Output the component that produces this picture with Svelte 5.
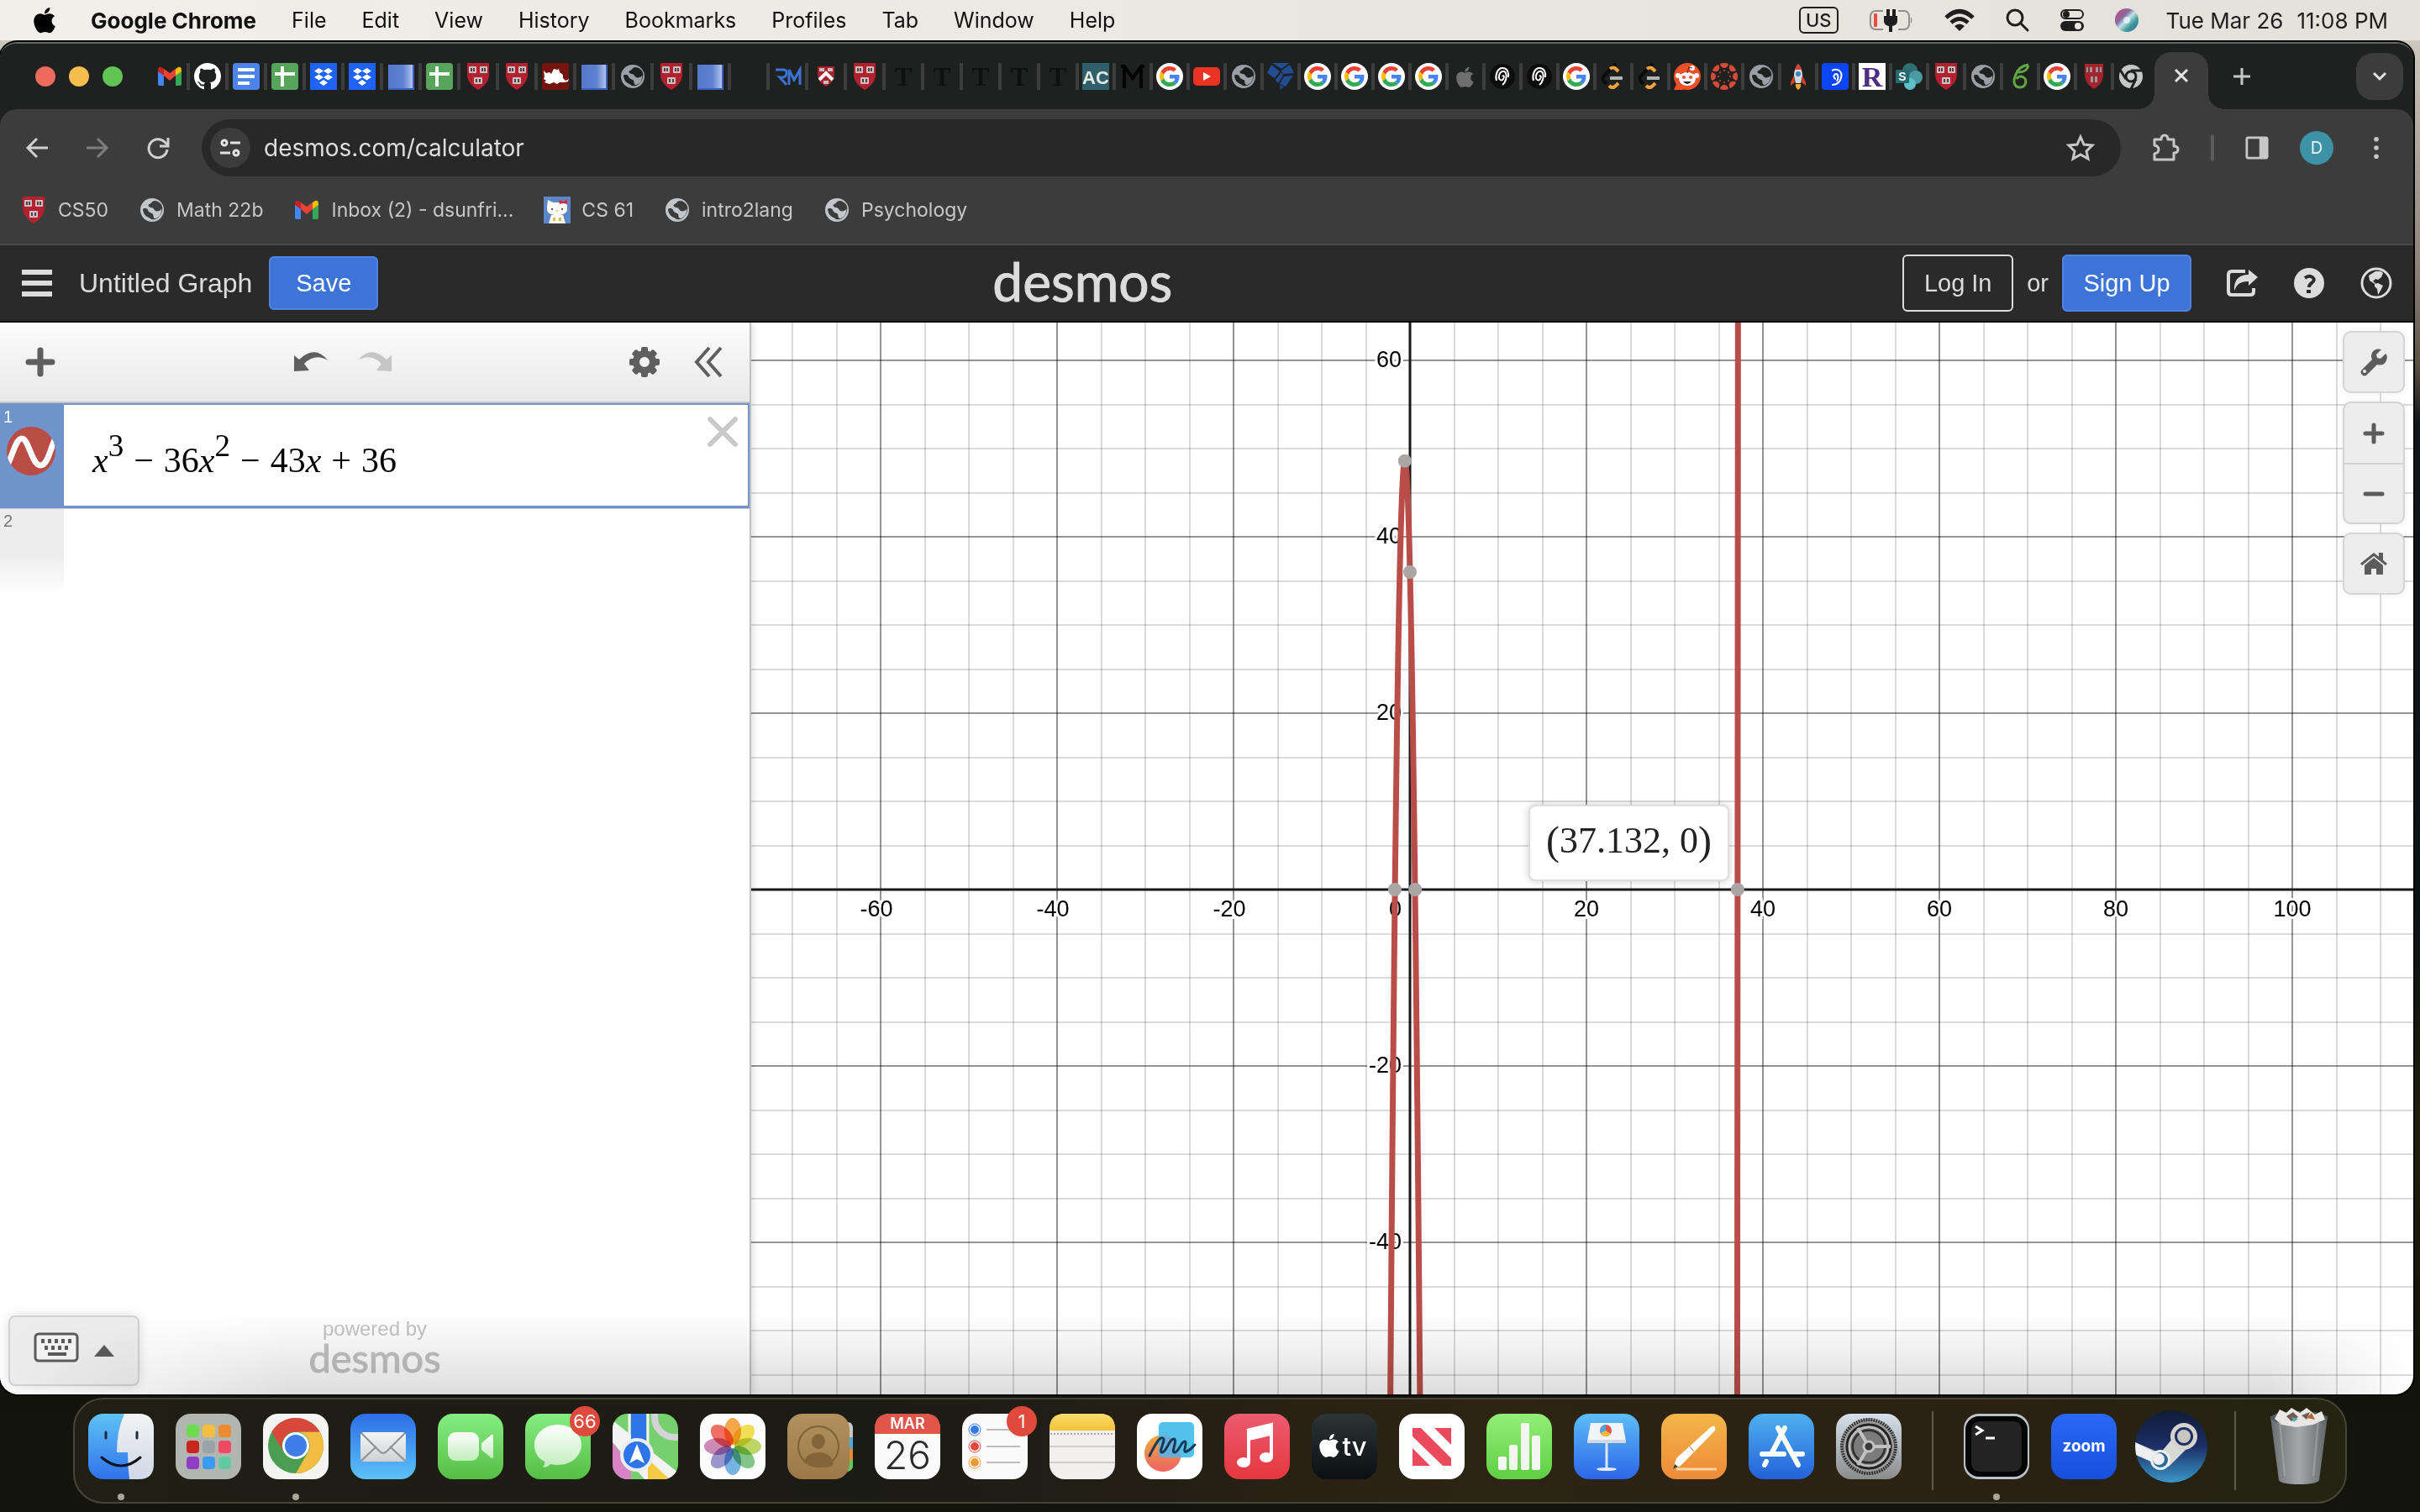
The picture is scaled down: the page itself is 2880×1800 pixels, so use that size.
<script>
  const menus = ['File', 'Edit', 'View', 'History', 'Bookmarks', 'Profiles', 'Tab', 'Window', 'Help'];

  const wideTabs = [
    'github', 'docs', 'sheets', 'dropbox', 'dropbox', 'blue', 'sheets', 'shield', 'shield', 'redcat',
    'blue', 'globe', 'shield', 'blue', 'blank', 'rm', 'shieldSmall', 'shield', 'nyt', 'nyt', 'nyt', 'nyt', 'nyt'
  ];
  const narrowTabs = [
    'ac', 'm', 'google', 'youtube', 'globe', 'gem', 'google', 'google', 'google', 'google', 'apple',
    'spiral', 'spiral', 'google', 'leet', 'leet', 'reddit', 'canvas', 'globe', 'rocket', 'nine', 'r',
    'sharepoint', 'shield', 'globe', 'green', 'google', 'shieldSmall2'
  ];

  const bookmarks = [
    { icon: 'shield', label: 'CS50' },
    { icon: 'globeLight', label: 'Math 22b' },
    { icon: 'gmail', label: 'Inbox (2) - dsunfri...' },
    { icon: 'kitty', label: 'CS 61' },
    { icon: 'globeLight', label: 'intro2lang' },
    { icon: 'globeLight', label: 'Psychology' }
  ];

  const dockMain = [
    { id: 'finder', name: 'Finder', running: true },
    { id: 'launchpad', name: 'Launchpad' },
    { id: 'chrome', name: 'Google Chrome', running: true },
    { id: 'mail', name: 'Mail' },
    { id: 'facetime', name: 'FaceTime' },
    { id: 'messages', name: 'Messages', badge: '66' },
    { id: 'maps', name: 'Maps' },
    { id: 'photos', name: 'Photos' },
    { id: 'contacts', name: 'Contacts' },
    { id: 'calendar', name: 'Calendar' },
    { id: 'reminders', name: 'Reminders', badge: '1' },
    { id: 'notes', name: 'Notes' },
    { id: 'freeform', name: 'Freeform' },
    { id: 'music', name: 'Music' },
    { id: 'tv', name: 'TV' },
    { id: 'news', name: 'News' },
    { id: 'numbers', name: 'Numbers' },
    { id: 'keynote', name: 'Keynote' },
    { id: 'pages', name: 'Pages' },
    { id: 'appstore', name: 'App Store' },
    { id: 'settings', name: 'System Settings' }
  ];
  const dockApps = [
    { id: 'terminal', name: 'Terminal', running: true },
    { id: 'zoom', name: 'Zoom' },
    { id: 'steam', name: 'Steam' }
  ];
  const dockEnd = [{ id: 'trash', name: 'Trash' }];

  // Graph geometry: origin and scale of the plotting area
  const W = 1978;
  const H = 1276;
  const ox = 784;
  const oy = 675;
  const unit = 10.5;
  const px = (x) => ox + x * unit;
  const py = (y) => oy - y * unit;
  const f = (x) => x ** 3 - 36 * x ** 2 - 43 * x + 36;

  function trace(from, to, step) {
    const pts = [];
    for (let x = from; x <= to; x += step) {
      const y = f(x);
      if (y > -70 && y < 80) pts.push(`${px(x).toFixed(2)},${py(y).toFixed(2)}`);
    }
    return pts.join(' ');
  }
  const hump = trace(-3, 3, 0.02);
  const riser = trace(37, 37.3, 0.001);

  const steps = Array.from({ length: 46 }, (_, i) => (i - 20) * 5);
  const vLines = steps.map((v) => ({ v, p: Math.round(px(v)), major: v % 20 === 0 })).filter((l) => l.p > 0 && l.p < W);
  const hLines = steps.map((v) => ({ v, p: Math.round(py(v)), major: v % 20 === 0 })).filter((l) => l.p > 0 && l.p < H);
  const points = [[-0.585, 48.6], [0, 36], [-1.72, 0], [0.59, 0], [37.132, 0]];
  const petals = ['#f79a2c', '#f3dc35', '#b5d14c', '#6fbf73', '#5fa8df', '#8d86c9', '#c878ac', '#f0574a'];
  const gearTeeth = Array.from({ length: 8 }, (_, i) => i * 45);
</script>

{#snippet googleG()}
  <path fill="#ea4335" d="M24 9.5c3.54 0 6.71 1.22 9.21 3.6l6.85-6.85C35.9 2.38 30.47 0 24 0 14.62 0 6.51 5.38 2.56 13.22l7.98 6.19C12.43 13.72 17.74 9.5 24 9.5z" />
  <path fill="#4285f4" d="M46.98 24.55c0-1.57-.15-3.09-.38-4.55H24v9.02h12.94c-.58 2.96-2.26 5.48-4.78 7.18l7.73 6c4.51-4.18 7.09-10.36 7.09-17.65z" />
  <path fill="#fbbc05" d="M10.53 28.59c-.48-1.45-.76-2.99-.76-4.59s.27-3.14.76-4.59l-7.98-6.19C.92 16.46 0 20.12 0 24c0 3.88.92 7.54 2.56 10.78l7.97-6.19z" />
  <path fill="#34a853" d="M24 48c6.48 0 11.93-2.13 15.89-5.81l-7.73-6c-2.15 1.45-4.92 2.3-8.16 2.3-6.26 0-11.57-4.22-13.47-9.91l-7.98 6.19C6.51 42.62 14.62 48 24 48z" />
{/snippet}

{#snippet appleMark()}
  <path d="M318.7 268.7c-.2-36.7 16.4-64.4 50-84.8-18.8-26.9-47.2-41.7-84.7-44.6-35.5-2.8-74.3 20.7-88.5 20.7-15 0-49.4-19.7-76.4-19.7C63.3 141.2 4 184.8 4 273.5q0 39.3 14.4 81.2c12.8 36.7 59 126.7 107.2 125.2 25.2-.6 43-17.9 75.8-17.9 31.8 0 48.3 17.9 76.4 17.9 48.6-.7 90.4-82.5 102.6-119.3-65.2-30.7-61.7-90-61.7-91.9zm-56.6-164.2c27.3-32.4 24.8-61.9 24-72.5-24.1 1.4-52 16.4-67.9 34.9-17.5 19.8-27.8 44.3-25.6 71.9 26.1 2 49.9-11.4 69.5-34.3z" />
{/snippet}

{#snippet shieldShape()}
  <path d="M3 0h26v13c0 9-6 15-13 19C9 28 3 22 3 13z" fill="#b3202f" />
  <g fill="#c9c0bf"><rect x="5" y="4" width="9" height="8" rx="1" /><rect x="18" y="4" width="9" height="8" rx="1" /><rect x="11" y="17" width="10" height="8" rx="1" /></g>
  <g fill="#5a3c3e"><rect x="7" y="6" width="2" height="4" /><rect x="10" y="6" width="2" height="4" /><rect x="20" y="6" width="2" height="4" /><rect x="23" y="6" width="2" height="4" /><rect x="13" y="19" width="2" height="4" /><rect x="17" y="19" width="2" height="4" /></g>
{/snippet}

{#snippet globeShape(fill, land)}
  <circle cx="16" cy="16" r="14" fill={fill} />
  <path fill={land} d="M20 5c-5 0-4 3-7 4s-1 4 2 4 3 3 5 4 6 0 7-2 0 7-3 9-5 3-6 1 0-4-2-5-4-1-5-4-6-2-6-1 1 7 5 9 4 2 5 3c3 1 9 0 12-7s1-13-7-15z" />
{/snippet}

{#snippet fav(name)}
  <svg class="fav" viewBox="0 0 32 32" aria-hidden="true">
    {#if name === 'gmail'}
      <path d="M2 9v16q0 2 2 2h5V14z" fill="#4285f4" />
      <path d="M30 9v16q0 2-2 2h-5V14z" fill="#34a853" />
      <path d="M23 7l3-2q4-1 4 4v1l-7 5z" fill="#fbbc04" />
      <path d="M2 10V9q0-5 4-4l3 2v8z" fill="#c5221f" />
      <path d="M9 7l7 5 7-5v8l-7 6-7-6z" fill="#ea4335" />
    {:else if name === 'github'}
      <path fill="#fff" transform="scale(2)" d="M8 0C3.58 0 0 3.58 0 8c0 3.54 2.29 6.53 5.47 7.59.4.07.55-.17.55-.38 0-.19-.01-.82-.01-1.49-2.01.37-2.53-.49-2.69-.94-.09-.23-.48-.94-.82-1.13-.28-.15-.68-.52-.01-.53.63-.01 1.08.58 1.23.82.72 1.21 1.87.87 2.33.66.07-.52.28-.87.51-1.07-1.78-.2-3.64-.89-3.64-3.95 0-.87.31-1.59.82-2.15-.08-.2-.36-1.02.08-2.12 0 0 .67-.21 2.2.82.64-.18 1.32-.27 2-.27s1.36.09 2 .27c1.53-1.04 2.2-.82 2.2-.82.44 1.1.16 1.92.08 2.12.51.56.82 1.27.82 2.15 0 3.07-1.87 3.75-3.65 3.95.29.25.54.73.54 1.48 0 1.07-.01 1.93-.01 2.2 0 .21.15.46.55.38A8.01 8.01 0 0016 8c0-4.42-3.58-8-8-8z" />
    {:else if name === 'docs'}
      <rect width="32" height="32" rx="4" fill="#4c84ec" />
      <path d="M6 8h20M6 16h20M6 24h14" stroke="#fff" stroke-width="4" />
    {:else if name === 'sheets'}
      <rect width="32" height="32" rx="4" fill="#56a55c" />
      <path d="M4 13h24M13 4v24" stroke="#fff" stroke-width="4" />
    {:else if name === 'dropbox'}
      <rect width="32" height="32" fill="#1e63f5" />
      <path fill="#fff" d="M10.500 6l5.500 3.500-5.500 3.500L5 9.500zM21.500 6L27 9.500 21.500 13 16 9.500zM10.500 13.500L16 17l-5.500 3.500L5 17zM21.500 13.500L27 17l-5.500 3.500L16 17zM16 20l5 3.500L16 27l-5-3.500z" />
    {:else if name === 'blue'}
      <rect x="1" y="2" width="30" height="30" fill="url(#blueTab)" />
      <path d="M1 31h30V2" stroke="#3c62bd" stroke-width="2" fill="none" />
    {:else if name === 'shield'}
      {@render shieldShape()}
    {:else if name === 'shieldSmall'}
      <path d="M6 4h20v10c0 7-5 11-10 14C11 25 6 21 6 14z" fill="#a5222f" />
      <path d="M8 20l8-8 8 8" stroke="#fff" stroke-width="4" fill="none" />
      <path d="M8 6h6v4H8zM18 6h6v4h-6zM13 21h6v4h-6z" fill="#cdb9b9" />
    {:else if name === 'shieldSmall2'}
      <path d="M5 1h22v13c0 8-5 13-11 17C10 27 5 22 5 14z" fill="#a5222f" />
      <path d="M7 5h7v6H7zM18 5h7v6h-7zM12 16h8v7h-8z" fill="#a89494" />
      <path d="M10 5v6M22 5v6M16 16v7" stroke="#6a3a3c" stroke-width="2" />
    {:else if name === 'redcat'}
      <rect width="32" height="32" rx="3" fill="#77130d" />
      <path fill="#fff" d="M2 9l3 3 4-1 2 2 3-6 4 1 2-1 1 4 4 3v4l3 3 4-2-1 3-4 1h-6l-3 2-4-2-5 2-6-2 2-2-3-2 1-3z" />
    {:else if name === 'globe'}
      {@render globeShape('#9aa0a6', '#1f2121')}
    {:else if name === 'globeLight'}
      {@render globeShape('#c3c6cb', '#3c3c3c')}
    {:else if name === 'rm'}
      <path d="M2 8h9q5 0 4 5t-8 4l8 9" stroke="#3a73d4" stroke-width="3" fill="none" />
      <path d="M18 26V8l6 12 7-12v18" stroke="#3a73d4" stroke-width="3" fill="none" />
    {:else if name === 'nyt'}
      <text x="16" y="27" text-anchor="middle" class="fav-serif" fill="#0f1010">T</text>
    {:else if name === 'ac'}
      <rect width="32" height="32" fill="#2f5f6c" />
      <text x="16" y="25" text-anchor="middle" class="fav-ac" fill="#e6eadd">AC</text>
    {:else if name === 'm'}
      <path d="M2 4h4l10 14L26 4h4M6 4v26M26 4v26" stroke="#050505" stroke-width="4" fill="none" />
    {:else if name === 'google'}
      <circle cx="16" cy="16" r="16" fill="#fff" />
      <g transform="translate(4 4) scale(.5)">{@render googleG()}</g>
    {:else if name === 'youtube'}
      <rect x="0" y="5" width="32" height="22" rx="5" fill="#ea3323" />
      <path d="M12 11l9 5-9 5z" fill="#fff" />
    {:else if name === 'gem'}
      <g fill="#234d92"><path d="M6 0h20l-9 7z" /><path d="M27 2l5 10-13 1-2-4z" /><path d="M5 2l10 8-6 8L0 12z" /><path d="M17 11l2 4-6 9-3-4z" /><path d="M20 16l11-1-9 13-7-3zM15 26l5 2-4 4z" /></g>
    {:else if name === 'apple'}
      <g transform="translate(5 3) scale(.054)" fill="#6e6e6e">{@render appleMark()}</g>
    {:else if name === 'spiral'}
      <circle cx="16" cy="16" r="15" fill="#0d0d0d" />
      <path d="M16 16c1-2 3 0 1 3s-6 1-5-4 6-7 8-3 0 11-4 14M9 21c-2-6 1-15 7-15s8 6 7 11" stroke="#fff" stroke-width="2" fill="none" />
    {:else if name === 'leet'}
      <path d="M19 1L5 15q-3 4 0 7l3 3" stroke="#0b0b0b" stroke-width="4" fill="none" />
      <path d="M12 7q4-3 7 0l3 3M11 27q4 4 8 0l3-3" stroke="#f0a23a" stroke-width="4" fill="none" />
      <path d="M12 18h15" stroke="#b3b3b3" stroke-width="4" />
    {:else if name === 'reddit'}
      <circle cx="16" cy="16" r="16" fill="#ee5128" />
      <path d="M0 32l4-9 8 9z" fill="#ee5128" />
      <ellipse cx="16" cy="19" rx="10" ry="8" fill="#fff" />
      <circle cx="5" cy="15" r="3" fill="#fff" /><circle cx="27" cy="15" r="3" fill="#fff" /><circle cx="22" cy="6" r="3" fill="#fff" />
      <path d="M16 12l2-7 4 1" stroke="#333" stroke-width="1" fill="none" />
      <circle cx="12" cy="17" r="2" fill="#ee5128" /><circle cx="20" cy="17" r="2" fill="#ee5128" />
      <path d="M11 22h10q-5 6-10 0z" fill="#222" />
    {:else if name === 'canvas'}
      {#each gearTeeth as a}
        <path transform={`rotate(${a} 16 16)`} d="M11 1q5-2 10 0-1 5-5 5t-5-5z" fill="#d64b38" />
        <circle transform={`rotate(${a} 16 16)`} cx="16" cy="9" r="1" fill="#d64b38" />
      {/each}
    {:else if name === 'rocket'}
      <path d="M11 15l-4 8v4l5-4zM21 15l4 8v4l-5-4z" fill="#d2422f" />
      <path d="M16 1c4 5 5 10 5 14l-2 9h-6l-2-9c0-4 1-9 5-14z" fill="#d5d9dc" />
      <path d="M16 1c2 2 3 4 4 7h-8c1-3 2-5 4-7z" fill="#d2422f" />
      <circle cx="16" cy="13" r="3" fill="#3a82c4" />
      <path d="M13 25h6q1 4-3 7-4-3-3-7z" fill="#f4a83a" />
    {:else if name === 'nine'}
      <rect width="32" height="32" rx="4" fill="#0b45f5" />
      <path d="M12 9c8-4 13 2 11 9s-7 8-11 8M17 19a3 3 0 1 1 1-6q3 3 0 9" stroke="#fff" stroke-width="2" fill="none" />
    {:else if name === 'r'}
      <rect width="32" height="32" fill="#fff" />
      <text x="16" y="28" text-anchor="middle" class="fav-r" fill="#4f2c84">R</text>
    {:else if name === 'sharepoint'}
      <circle cx="17" cy="9" r="9" fill="#2f6f74" />
      <circle cx="24" cy="17" r="8" fill="#4a9ba1" />
      <circle cx="17" cy="25" r="7" fill="#5fc0c9" />
      <rect x="0" y="8" width="16" height="16" rx="1" fill="#256a70" />
      <text x="8" y="21" text-anchor="middle" class="fav-s" fill="#fff">S</text>
    {:else if name === 'green'}
      <path d="M26 2q-12 2-15 12c-4 8-2 15 5 15s9-9 4-12-8 2-8 2M26 3q-2 8-12 8" stroke="#62a744" stroke-width="3" fill="none" />
    {:else if name === 'chromeGray'}
      <circle cx="16" cy="16" r="14" fill="#c7c7c7" />
      <circle cx="16" cy="16" r="6" fill="#c7c7c7" stroke="#1f2121" stroke-width="3" />
      <path d="M16 9h13M10 19L3 8M22 19l-6 12" stroke="#1f2121" stroke-width="3" />
    {:else if name === 'kitty'}
      <rect width="32" height="32" fill="#5b86c8" />
      <path d="M5 4l6 3h10l6-3 1 9q1 9-12 9T4 13z" fill="#fff" />
      <path d="M18 4l5 2 5-3v6l-5-1-4 1z" fill="#cf2b3b" />
      <path d="M9 22h14l3 10H6z" fill="#fff" /><path d="M11 25h3v4h-3zM18 25h3v4h-3z" fill="#e8b83a" />
      <circle cx="10" cy="15" r="1" fill="#222" /><circle cx="22" cy="15" r="1" fill="#222" /><circle cx="16" cy="17" r="1" fill="#e8b83a" />
    {/if}
  </svg>
{/snippet}

{#snippet dockIcon(id)}
  <svg class="app" viewBox="0 0 78 78" aria-hidden="true">
    {#if id === 'finder'}
      <rect width="78" height="78" rx="18" fill="url(#finderL)" />
      <path d="M43 0h17q18 0 18 18v42q0 18-18 18H49q-2-16-2-32H34q0-26 9-46z" fill="url(#finderR)" />
      <path d="M21 22v7M58 22v7" stroke="#1d2a3d" stroke-width="3" stroke-linecap="round" />
      <path d="M16 52q23 20 46 0" stroke="#10141c" stroke-width="3" fill="none" stroke-linecap="round" />
    {:else if id === 'launchpad'}
      <rect width="78" height="78" rx="18" fill="#b3b5b1" />
      {#each ['#6fdc4f', '#f5bf3c', '#ec8b30', '#c9251c', '#99a3a8', '#ee4a63', '#8f3fc4', '#3a9bf0', '#5fcaa4'] as c, i}
        <rect x={13 + (i % 3) * 19} y={13 + Math.floor(i / 3) * 19} width="15" height="15" rx="4" fill={c} />
      {/each}
    {:else if id === 'chrome'}
      <rect width="78" height="78" rx="18" fill="#f4f4f3" />
      <circle cx="39" cy="38" r="33" fill="#4b9e51" />
      <path d="M67.600 21.500A33 33 0 0 1 39 71L53.300 46.250A16.500 16.500 0 0 0 39 21.500Z" fill="#f3bd43" />
      <path d="M10.400 21.500A33 33 0 0 1 67.600 21.500L39 21.500A16.500 16.500 0 0 0 24.700 46.250Z" fill="#d9493b" />
      <circle cx="39" cy="38" r="16" fill="#fff" /><circle cx="39" cy="38" r="13" fill="#3f7de8" />
    {:else if id === 'mail'}
      <rect width="78" height="78" rx="18" fill="url(#mailBg)" />
      <rect x="12" y="22" width="54" height="35" rx="4" fill="url(#silver)" />
      <path d="M13 56l18-17M65 56L47 39M13 23l22 22q4 4 8 0l22-22" stroke="#8d9196" stroke-width="2" fill="none" />
    {:else if id === 'facetime'}
      <rect width="78" height="78" rx="18" fill="url(#greenBg)" />
      <rect x="12" y="22" width="37" height="34" rx="9" fill="url(#whiteGreen)" />
      <path d="M52 35l12-10q2-1 2 2v24q0 3-2 2L52 43z" fill="url(#whiteGreen)" />
    {:else if id === 'messages'}
      <rect width="78" height="78" rx="18" fill="url(#greenBg)" />
      <path d="M39 13c16 0 28 11 28 24S55 61 39 61q-5 0-9-1-4 4-9 4 3-4 2-7C15 53 11 46 11 37c0-13 12-24 28-24z" fill="url(#whiteGreen)" />
    {:else if id === 'maps'}
      <clipPath id="mapsClip"><rect width="78" height="78" rx="18" /></clipPath>
      <g clip-path="url(#mapsClip)">
        <rect width="78" height="78" fill="#77cf6d" />
        <path d="M0 8l78 62v8H38L0 34z" fill="#f3f3f4" />
        <path d="M0 34l22 30v14H0z" fill="#d983c6" /><path d="M42 54l26 24H42z" fill="#f5cb45" />
        <path d="M22 0h18v45H22z" fill="#2f75ea" />
        <path d="M20 0v40M42 0v40" stroke="#f3f3f4" stroke-width="3" />
        <circle cx="74" cy="4" r="24" fill="none" stroke="#d4d4d8" stroke-width="8" />
        <circle cx="29" cy="49" r="18" fill="#2f75ea" stroke="#e9eef6" stroke-width="4" />
        <path d="M29 36l9 23-9-5-9 5z" fill="#fff" />
      </g>
    {:else if id === 'photos'}
      <rect width="78" height="78" rx="18" fill="#fcfcfc" />
      {#each petals as c, i}
        <ellipse class="petal" transform={`rotate(${i * 45} 39 39)`} cx="39" cy="21" rx="10" ry="16" fill={c} />
      {/each}
    {:else if id === 'contacts'}
      <path d="M62 10h10q6 0 6 8v42q0 8-6 8H62z" fill="#c9c8c4" /><path d="M66 28h12v14H66z" fill="#4fa8e0" /><path d="M66 42h12v13H66z" fill="#ea8b30" /><path d="M66 55h12v6q0 6-6 8h-6z" fill="#5ecb57" />
      <rect width="74" height="78" rx="18" fill="url(#tan)" />
      <circle cx="37" cy="39" r="24" fill="none" stroke="#7f6138" stroke-width="2" />
      <ellipse cx="37" cy="33" rx="8" ry="9" fill="#846539" /><path d="M20 56q4-10 17-10t17 10-17 7-17-7z" fill="#846539" />
    {:else if id === 'calendar'}
      <rect width="78" height="78" rx="18" fill="#fafafa" />
      <path d="M0 24v-6Q0 0 18 0h42q18 0 18 18v6z" fill="#e0564b" />
      <text x="39" y="18" text-anchor="middle" class="cal-month" fill="#fff">MAR</text>
      <text x="39" y="66" text-anchor="middle" class="cal-day" fill="#2b2b2b">26</text>
    {:else if id === 'reminders'}
      <rect width="78" height="78" rx="18" fill="#fafafa" />
      <path d="M29 19h40M29 39h40M29 58h40" stroke="#bdbdbd" stroke-width="2" />
      <g stroke="#fff" stroke-width="2"><circle cx="15" cy="19" r="6" fill="#347af0" /><circle cx="15" cy="39" r="6" fill="#e14a3d" /><circle cx="15" cy="58" r="6" fill="#ec9a36" /></g>
      <g fill="none" stroke-width="1"><circle cx="15" cy="19" r="7" stroke="#347af0" /><circle cx="15" cy="39" r="7" stroke="#e14a3d" /><circle cx="15" cy="58" r="7" stroke="#ec9a36" /></g>
    {:else if id === 'notes'}
      <rect width="78" height="78" rx="18" fill="#f1f0ee" />
      <path d="M0 20v-2Q0 0 18 0h42q18 0 18 18v2z" fill="url(#yellow)" />
      <path d="M1 24h76" stroke="#a9a7a2" stroke-width="2" stroke-dasharray="2 2" />
      <path d="M0 39h78M0 58h78" stroke="#cfcecb" stroke-width="2" />
    {:else if id === 'freeform'}
      <rect width="78" height="78" rx="18" fill="#fff" />
      <circle cx="31" cy="47" r="22" fill="url(#orangeRed)" />
      <rect x="26" y="10" width="42" height="42" rx="5" fill="#52c2ec" />
      <path d="M26 48V34q4-8 9-10 14 8 18 28H30q-4 0-4-4z" fill="#7a9fd0" opacity=".6" />
      <path d="M15 50c7-14 12-23 16-21s-6 17-1 17 9-17 14-16-4 16 1 16 8-14 12-13-4 14 2 12 9-8 10-8" stroke="#143a56" stroke-width="3" fill="none" stroke-linecap="round" />
    {:else if id === 'music'}
      <rect width="78" height="78" rx="18" fill="url(#musicBg)" />
      <path d="M27 20l29-7v38M29 30l26-6" stroke="#fff" stroke-width="4" fill="none" /><path d="M27 20l29-7v12l-27 6z" fill="#fff" />
      <path d="M29 22v34" stroke="#fff" stroke-width="4" />
      <ellipse cx="23" cy="58" rx="8" ry="6" fill="#fff" /><ellipse cx="50" cy="52" rx="8" ry="6" fill="#fff" />
    {:else if id === 'tv'}
      <rect width="78" height="78" rx="18" fill="url(#tvBg)" />
      <g transform="translate(9 22) scale(.062)" fill="#fff">{@render appleMark()}</g>
      <text x="51" y="50" text-anchor="middle" class="tv-text" fill="#fff">tv</text>
    {:else if id === 'news'}
      <rect width="78" height="78" rx="18" fill="#fff" />
      <path d="M16 17h10l36 36v9H52L16 27z" fill="#ea4a5c" />
      <path d="M42 17h20v20zM16 41v21h21z" fill="#ea4a5c" />
    {:else if id === 'numbers'}
      <rect width="78" height="78" rx="18" fill="url(#numbersBg)" />
      <g fill="#f4f6f2"><rect x="14" y="51" width="10" height="16" rx="2" /><rect x="27" y="37" width="10" height="30" rx="2" /><rect x="41" y="11" width="10" height="56" rx="2" /><rect x="54" y="26" width="10" height="41" rx="2" /></g>
    {:else if id === 'keynote'}
      <rect width="78" height="78" rx="18" fill="url(#keynoteBg)" />
      <path d="M20 11h38l4 22H16z" fill="#f2f4f7" /><path d="M16 31h46v4H16z" fill="#cfd8e4" />
      <circle cx="38" cy="20" r="7" fill="#e0564b" /><path d="M38 20V13a7 7 0 0 0-6 10z" fill="#4ba8e8" /><path d="M38 20l6 4a7 7 0 0 1-12-1z" fill="#f0bb3e" />
      <path d="M39 35v31" stroke="#dfe6ee" stroke-width="3" /><ellipse cx="39" cy="66" rx="12" ry="2" fill="#e5ebf2" />
    {:else if id === 'pages'}
      <rect width="78" height="78" rx="18" fill="url(#pagesBg)" />
      <path d="M18 66h48" stroke="#f9d5a8" stroke-width="3" />
      <path d="M14 66l4-13 41-37q4-3 5 0t-1 5L23 62z" fill="#fff" /><path d="M34 39l5 6" stroke="#9a7a55" stroke-width="1" /><path d="M14 66l2-6 4 3z" fill="#4a3a2a" />
    {:else if id === 'appstore'}
      <rect width="78" height="78" rx="18" fill="url(#storeBg)" />
      <path d="M43 17L27 48M35 17l24 44M16 48h26M52 48h12M21 57l-2 4" stroke="#fff" stroke-width="6" stroke-linecap="round" />
    {:else if id === 'settings'}
      <rect width="78" height="78" rx="18" fill="url(#setBg)" />
      <circle cx="39" cy="39" r="32" fill="#9b9b9b" stroke="#333" stroke-width="4" stroke-dasharray="2 1" />
      <circle cx="39" cy="39" r="26" fill="#555" stroke="#222" stroke-width="3" />
      <circle cx="39" cy="39" r="19" fill="#7b7b7b" stroke="#2b2b2b" stroke-width="2" />
      <path d="M39 39h26M39 39L26 17M39 39L26 61" stroke="#c2c2c2" stroke-width="4" />
      <circle cx="39" cy="39" r="23" fill="none" stroke="#bdbdbd" stroke-width="3" /><circle cx="39" cy="39" r="6" fill="#3a3a3a" stroke="#c2c2c2" stroke-width="3" />
    {:else if id === 'terminal'}
      <rect width="78" height="78" rx="18" fill="#b9c3c8" /><rect x="2" y="3" width="74" height="72" rx="16" fill="#050505" /><rect x="9" y="9" width="60" height="60" rx="10" fill="#232323" />
      <path d="M14 15l8 5-8 5M26 29h11" stroke="#fff" stroke-width="3" fill="none" />
    {:else if id === 'zoom'}
      <rect width="78" height="78" rx="18" fill="url(#zoomBg)" />
      <text x="39" y="45" text-anchor="middle" class="zoom-text" fill="#fff">zoom</text>
    {:else if id === 'steam'}
      <circle cx="39" cy="39" r="43" fill="url(#steamBg)" />
      <clipPath id="steamClip"><circle cx="39" cy="39" r="43" /></clipPath>
      <g clip-path="url(#steamClip)">
        <path d="M-6 33l32 14L40 30l18 11-22 22z" fill="#d9d9d6" /><path d="M-6 33l26 14 4 14L-6 48z" fill="#efefef" />
        <circle cx="54" cy="27" r="16" fill="#d6d3ce" /><circle cx="54" cy="27" r="11" fill="#1d2f63" /><circle cx="54" cy="27" r="8" fill="#c9c6c1" />
        <circle cx="26" cy="55" r="12" fill="#efefef" /><circle cx="26" cy="55" r="9" fill="#2b6a9c" /><circle cx="24" cy="54" r="7" fill="#efefef" />
      </g>
    {:else if id === 'trash'}
      <path d="M5 3h68l-10 76q-2 5-24 5t-24-5z" fill="url(#trashBg)" />
      <ellipse cx="39" cy="5" rx="34" ry="8" fill="#55585a" />
      <path d="M10 6l6-11 8 4 6-6 10 6 8-6 10 8 8-4 4 10-14 6-20 3-18-3z" fill="#e9e7e4" />
      <path d="M24 3l8-5 6 6-8 5zM42 2l10-4-4 9z" fill="#6f5b52" /><path d="M30 4l8 2-5 4z" fill="#58a8c4" /><path d="M48 5l6-6 4 8z" fill="#b5643b" />
      <path d="M16 8l6 66M62 8l-6 66" stroke="#c3c6c8" stroke-width="2" opacity=".4" />
    {/if}
  </svg>
{/snippet}

{#snippet dockItem(item)}
  <li class="dock-slot">
    <button class="dock-button" type="button" aria-label={item.name}>
      {@render dockIcon(item.id)}
      {#if item.badge}<span class="badge">{item.badge}</span>{/if}
    </button>
    <span class="running" class:on={item.running}></span>
  </li>
{/snippet}

<div class="screen">
  <svg class="defs" width="0" height="0" aria-hidden="true">
    <defs>
      <linearGradient id="blueTab"><stop offset="0" stop-color="#5577cc" /><stop offset=".6" stop-color="#5f82d2" /><stop offset="1" stop-color="#b9c8ee" /></linearGradient>
      <linearGradient id="finderL" x2="0" y2="1"><stop offset="0" stop-color="#5ec3f6" /><stop offset="1" stop-color="#2f72ea" /></linearGradient>
      <linearGradient id="finderR" x2="0" y2="1"><stop offset="0" stop-color="#f3f3f4" /><stop offset="1" stop-color="#cfd8e6" /></linearGradient>
      <linearGradient id="mailBg" x2="0" y2="1"><stop offset="0" stop-color="#2d6fe8" /><stop offset="1" stop-color="#5cc2f8" /></linearGradient>
      <linearGradient id="silver" x2="0" y2="1"><stop offset="0" stop-color="#f6f6f6" /><stop offset="1" stop-color="#cfd1d3" /></linearGradient>
      <linearGradient id="greenBg" x2="0" y2="1"><stop offset="0" stop-color="#85ee82" /><stop offset="1" stop-color="#56bd45" /></linearGradient>
      <linearGradient id="whiteGreen" x2="0" y2="1"><stop offset="0" stop-color="#fdfffd" /><stop offset="1" stop-color="#c3ecbd" /></linearGradient>
      <linearGradient id="tan" x2="0" y2="1"><stop offset="0" stop-color="#b3915f" /><stop offset="1" stop-color="#9c7848" /></linearGradient>
      <linearGradient id="yellow" x2="0" y2="1"><stop offset="0" stop-color="#f8dc6f" /><stop offset="1" stop-color="#f4c337" /></linearGradient>
      <linearGradient id="orangeRed" x2="0" y2="1"><stop offset="0" stop-color="#f3aa3d" /><stop offset="1" stop-color="#ec6463" /></linearGradient>
      <linearGradient id="musicBg" x2="0" y2="1"><stop offset="0" stop-color="#ec5b70" /><stop offset="1" stop-color="#e5373f" /></linearGradient>
      <linearGradient id="tvBg" x2="0" y2="1"><stop offset="0" stop-color="#2b3535" /><stop offset="1" stop-color="#0b0f12" /></linearGradient>
      <linearGradient id="numbersBg" x2="0" y2="1"><stop offset="0" stop-color="#92ef77" /><stop offset="1" stop-color="#5fcf43" /></linearGradient>
      <linearGradient id="keynoteBg" x2="0" y2="1"><stop offset="0" stop-color="#5cbdf7" /><stop offset="1" stop-color="#2c66e8" /></linearGradient>
      <linearGradient id="pagesBg" x2="0" y2="1"><stop offset="0" stop-color="#f4b64a" /><stop offset="1" stop-color="#ee8a37" /></linearGradient>
      <linearGradient id="storeBg" x2="0" y2="1"><stop offset="0" stop-color="#4fb1f0" /><stop offset="1" stop-color="#2361d8" /></linearGradient>
      <linearGradient id="setBg" x2="0" y2="1"><stop offset="0" stop-color="#d5e0ea" /><stop offset="1" stop-color="#8c8c8c" /></linearGradient>
      <linearGradient id="zoomBg" x2="0" y2="1"><stop offset="0" stop-color="#2a68f5" /><stop offset="1" stop-color="#1650dc" /></linearGradient>
      <linearGradient id="steamBg" x2="0" y2="1"><stop offset="0" stop-color="#101c38" /><stop offset=".5" stop-color="#1c2f66" /><stop offset="1" stop-color="#3a97c8" /></linearGradient>
      <linearGradient id="trashBg"><stop offset="0" stop-color="#6b6e70" /><stop offset=".5" stop-color="#a5a8aa" /><stop offset="1" stop-color="#626567" /></linearGradient>
      <linearGradient id="siri" x2="1" y2="1"><stop offset="0" stop-color="#c8447a" /><stop offset=".35" stop-color="#8a6a9c" /><stop offset=".5" stop-color="#bfe3ea" /><stop offset=".7" stop-color="#3f9c96" /><stop offset="1" stop-color="#3c52b0" /></linearGradient>
    </defs>
  </svg>

  <header class="menubar">
    <nav class="menus" aria-label="Menu bar">
      <button type="button" aria-label="Apple menu"><svg class="apple" viewBox="0 20 384 470"><g>{@render appleMark()}</g></svg></button>
      <button type="button" class="app-name">Google Chrome</button>
      {#each menus as m}<button type="button">{m}</button>{/each}
    </nav>
    <div class="status">
      <span class="us">US</span>
      <svg class="battery" viewBox="0 0 52 32" aria-label="Battery"><rect x="1" y="5" width="46" height="22" rx="6" fill="none" stroke="#8f8e8a" stroke-width="2" /><path d="M49 12q3 4 0 8z" fill="#8f8e8a" /><rect x="5" y="8" width="4" height="16" rx="1" fill="#ee4b3f" /><path d="M16 2h18v28H16z" fill="#e8e6df" /><path d="M17 11h16v6q0 5-6 6v7h-4v-7q-6-1-6-6zM20 3h4v8h-4zM27 3h4v8h-4z" fill="#1e1e1e" /></svg>
      <svg class="wifi" viewBox="0 0 36 28" aria-label="Wi-Fi"><g fill="none" stroke="#1e1e1e" stroke-width="5"><path d="M2 11q16-15 32 0" /><path d="M8 17q10-9 20 0" /></g><path d="M12 21q6-5 12 0l-6 6z" fill="#1e1e1e" /></svg>
      <svg class="s28" viewBox="0 0 28 28" aria-label="Search"><circle cx="11" cy="11" r="9" fill="none" stroke="#1e1e1e" stroke-width="3" /><path d="M18 18l8 8" stroke="#1e1e1e" stroke-width="3" stroke-linecap="round" /></svg>
      <svg class="s28" viewBox="0 0 28 28" aria-label="Control Centre"><rect x="1" y="2" width="26" height="10" rx="5" fill="none" stroke="#1e1e1e" stroke-width="2" /><circle cx="7" cy="7" r="4" fill="#1e1e1e" /><rect x="0" y="15" width="28" height="12" rx="6" fill="#1e1e1e" /><circle cx="21" cy="21" r="4" fill="#e8e6df" /></svg>
      <svg class="s28" viewBox="0 0 28 28" aria-label="Siri"><circle cx="14" cy="14" r="14" fill="url(#siri)" /><circle cx="14" cy="14" r="4" fill="#fff" opacity=".6" /></svg>
      <span class="clock"><span>Tue Mar 26</span><span>11:08 PM</span></span>
    </div>
  </header>

  <main class="window">
    <section class="chrome">
      <div class="tabs">
        <div class="lights"><i class="close"></i><i class="mini"></i><i class="full"></i></div>
        <button type="button" class="tab first" aria-label="Gmail tab">{@render fav('gmail')}</button>
        {#each wideTabs as t}<button type="button" class="tab" aria-label={`${t} tab`}>{@render fav(t)}</button>{/each}
        {#each narrowTabs as t}<button type="button" class="tab narrow" aria-label={`${t} tab`}>{@render fav(t)}</button>{/each}
        <button type="button" class="tab narrow last" aria-label="Chrome tab">{@render fav('chromeGray')}</button>
        <div class="active-tab">
          <button type="button" aria-label="Close tab"><svg class="s16" viewBox="0 0 16 16"><path d="M1 1l14 14M15 1L1 15" stroke="#e3e3e3" stroke-width="3" /></svg></button>
        </div>
        <button type="button" class="new-tab" aria-label="New tab"><svg class="s20" viewBox="0 0 20 20"><path d="M10 0v20M0 10h20" stroke="#c7c7c7" stroke-width="3" /></svg></button>
        <button type="button" class="tab-list" aria-label="Search tabs"><svg class="s16" viewBox="0 0 16 16"><path d="M1 4l7 7 7-7" stroke="#e3e3e3" stroke-width="3" fill="none" /></svg></button>
      </div>

      <div class="toolbar">
        <div class="nav">
          <button type="button" aria-label="Back"><svg class="s28" viewBox="0 0 28 28"><path d="M27 14H3M14 3L3 14l11 11" stroke="#d0d0d0" stroke-width="3" fill="none" /></svg></button>
          <button type="button" aria-label="Forward"><svg class="s28" viewBox="0 0 28 28"><path d="M1 14h24M14 3l11 11-11 11" stroke="#7d7d7d" stroke-width="3" fill="none" /></svg></button>
          <button type="button" aria-label="Reload"><svg class="s28" viewBox="0 0 28 28"><path d="M25 16a11 11 0 1 1-3-9l4 4" stroke="#d0d0d0" stroke-width="3" fill="none" /><path d="M26 2v10H16" stroke="#d0d0d0" stroke-width="3" fill="none" /></svg></button>
        </div>
        <div class="omnibox">
          <button type="button" class="site" aria-label="View site information"><svg class="s24" viewBox="0 0 24 24"><g fill="none" stroke="#e3e3e3" stroke-width="3"><circle cx="5" cy="6" r="3" /><circle cx="19" cy="18" r="3" /><path d="M12 6h12M0 18h12" /></g></svg></button>
          <input type="text" aria-label="Address" value="desmos.com/calculator" />
          <button type="button" aria-label="Bookmark this tab"><svg class="s32" viewBox="0 0 32 32"><path d="M16 3l4 9 10 1-7 7 2 9-9-5-9 5 2-9-7-7 10-1z" stroke="#c7c7c7" stroke-width="3" fill="none" /></svg></button>
        </div>
        <div class="tools">
          <button type="button" aria-label="Extensions"><svg class="s34" viewBox="0 0 34 34"><path d="M4 7h8q0-5 4-5t4 5h7v8q5 0 5 4t-5 4v8H4v-7q5-1 5-5t-5-5z" stroke="#c7c7c7" stroke-width="3" fill="none" stroke-linejoin="round" /></svg></button>
          <span class="divider"></span>
          <button type="button" aria-label="Side panel"><svg class="s28" viewBox="0 0 30 30"><rect x="2" y="2" width="26" height="26" rx="2" fill="none" stroke="#c7c7c7" stroke-width="3" /><path d="M18 2h10v26H18z" fill="#c7c7c7" /></svg></button>
          <button type="button" class="avatar" aria-label="Profile">D</button>
          <button type="button" aria-label="Chrome menu"><svg class="s28" viewBox="0 0 30 30"><g fill="#c7c7c7"><circle cx="15" cy="4" r="3" /><circle cx="15" cy="15" r="3" /><circle cx="15" cy="26" r="3" /></g></svg></button>
        </div>
      </div>

      <nav class="bookmarks" aria-label="Bookmarks">
        {#each bookmarks as b}<a href="#bookmark">{@render fav(b.icon)}<span>{b.label}</span></a>{/each}
      </nav>
    </section>

    <section class="desmos-bar">
      <div class="left">
        <button type="button" class="burger" aria-label="Open menu"><svg viewBox="0 0 36 32"><path d="M0 3h36M0 16h36M0 29h36" stroke="#dcdcdc" stroke-width="6" /></svg></button>
        <h1>Untitled Graph</h1>
        <button type="button" class="blue-button save">Save</button>
      </div>
      <span class="logo">desmos</span>
      <div class="right">
        <button type="button" class="login">Log In</button>
        <span class="or">or</span>
        <button type="button" class="blue-button signup">Sign Up</button>
        <div class="icons">
          <button type="button" aria-label="Share"><svg class="s36" viewBox="0 0 36 36"><path d="M22 4H6Q2 4 2 8v20q0 4 4 4h22q4 0 4-4v-4" fill="none" stroke="#dcdcdc" stroke-width="4" /><path d="M26 2l11 9-11 10v-5Q13 15 9 27 8 8 26 8z" fill="#dcdcdc" /></svg></button>
          <button type="button" aria-label="Help"><svg class="s36" viewBox="0 0 36 36"><circle cx="18" cy="18" r="18" fill="#dcdcdc" /><path d="M13 12q5-4 9-1t-1 7q-3 2-3 5" stroke="#2a2a2a" stroke-width="4" fill="none" /><rect x="15" y="26" width="5" height="4" fill="#2a2a2a" /></svg></button>
          <button type="button" aria-label="Language"><svg class="s36" viewBox="0 0 36 36"><circle cx="18" cy="18" r="17" fill="none" stroke="#dcdcdc" stroke-width="3" /><path d="M9 9l8-5 6 0 3 2-2 5-4 3-3-1-3 3 3 2-1 1-6-4zM16 19l4-1 6 3-3 6-3 5-1-7-3-3z" fill="#dcdcdc" /></svg></button>
        </div>
      </div>
    </section>

    <section class="calculator">
      <aside class="panel">
        <div class="panel-tools">
          <button type="button" aria-label="Add item"><svg class="s36" viewBox="0 0 36 36"><path d="M18 4v28M4 18h28" stroke="#5f5f5f" stroke-width="7" stroke-linecap="round" /></svg></button>
          <div class="history">
            <button type="button" aria-label="Undo"><svg class="arrow" viewBox="0 0 42 26"><path d="M1 5l6 5Q26-8 41 11 26 2 13 15l6 8-18 1z" fill="#5f5f5f" /></svg></button>
            <button type="button" aria-label="Redo"><svg class="arrow" viewBox="0 0 42 26"><path d="M41 5l-6 5Q16-8 1 11 16 2 29 15l-6 8 18 1z" fill="#c6c6c6" /></svg></button>
          </div>
          <div class="panel-right">
            <button type="button" aria-label="Edit list"><svg class="s36" viewBox="0 0 36 36"><g fill="#5f5f5f">{#each gearTeeth as a}<rect transform={`rotate(${a} 18 18)`} x="14" y="0" width="8" height="9" rx="2" />{/each}</g><circle cx="18" cy="18" r="10" fill="none" stroke="#5f5f5f" stroke-width="8" /></svg></button>
            <button type="button" aria-label="Hide list"><svg class="s36" viewBox="0 0 36 36"><path d="M19 1L4 18l15 17M33 1L18 18l15 17" stroke="#5f5f5f" stroke-width="4" fill="none" /></svg></button>
          </div>
        </div>

        <div class="row selected">
          <div class="gutter">
            <span class="num">1</span>
            <svg class="curve-icon" viewBox="0 0 58 58" aria-label="Curve colour"><clipPath id="curveClip"><circle cx="29" cy="29" r="29" /></clipPath><circle cx="29" cy="29" r="29" fill="#ba4c46" /><path clip-path="url(#curveClip)" d="M-2 50C6 40 10 14 18 14s12 32 22 32S52 22 60 10" stroke="#fff" stroke-width="7" fill="none" /></svg>
          </div>
          <div class="math" role="textbox" aria-label="Expression 1" tabindex="0"><i>x</i><sup>3</sup><b>−</b>36<i>x</i><sup>2</sup><b>−</b>43<i>x</i><b>+</b>36</div>
          <button type="button" class="delete" aria-label="Delete expression"><svg class="s36" viewBox="0 0 36 36"><path d="M3 3l30 30M33 3L3 33" stroke="#c9c9c9" stroke-width="6" stroke-linecap="round" /></svg></button>
        </div>
        <div class="row empty"><div class="gutter"><span class="num">2</span></div></div>

        <div class="powered"><span>powered by</span><span class="logo small">desmos</span></div>
        <button type="button" class="keypad" aria-label="Open keypad">
          <svg class="kb" viewBox="0 0 54 36"><rect x="2" y="2" width="50" height="32" rx="4" fill="#f4f4f4" stroke="#5c5c5c" stroke-width="3" /><g fill="#5c5c5c"><path d="M9 8h4v5H9zM17 8h4v5h-4zM25 8h4v5h-4zM33 8h4v5h-4zM41 8h4v5h-4zM13 16h4v5h-4zM21 16h4v5h-4zM29 16h4v5h-4zM37 16h4v5h-4zM17 24h22v4H17z" /></g></svg>
          <svg class="tri" viewBox="0 0 24 14"><path d="M12 0l12 14H0z" fill="#5c5c5c" /></svg>
        </button>
      </aside>

      <div class="graph">
        <svg class="plot" viewBox={`0 0 ${W} ${H}`} preserveAspectRatio="xMinYMin slice" role="img" aria-label="Graph of the expression">
          {#each vLines as l}<line x1={l.p} x2={l.p} y1="0" y2={H} class={l.major ? 'major' : 'minor'} />{/each}
          {#each hLines as l}<line y1={l.p} y2={l.p} x1="0" x2={W} class={l.major ? 'major' : 'minor'} />{/each}
          <line x1={ox} x2={ox} y1="0" y2={H} class="axis" />
          <line x1="0" x2={W} y1={oy} y2={oy} class="axis" />
          {#each [-60, -40, -20, 20, 40, 60, 80, 100] as v}<text x={px(v) - (v < 0 ? 5 : 0)} y={oy + 32} text-anchor="middle" class="tick">{v}</text>{/each}
          <text x={ox - 10} y={oy + 32} text-anchor="end" class="tick">0</text>
          {#each [60, 40, 20, -20, -40] as v}<text x={ox - 10} y={py(v) + 8} text-anchor="end" class="tick">{v}</text>{/each}
          <polyline points={hump} class="curve" />
          <polyline points={riser} class="curve" />
          {#each points as p}<circle cx={px(p[0])} cy={py(p[1])} r="8" class="poi" />{/each}
        </svg>
        <div class="tooltip"><span class="paren">(</span>37.132, 0<span class="paren">)</span></div>
        <div class="controls">
          <button type="button" aria-label="Graph settings"><svg class="s32" viewBox="0 0 32 32"><path d="M30 6l-6 6-4-1-1-4 6-6q-8-2-11 4-2 4 0 8L2 25q-3 3 0 6t6 0l12-12q7 2 10-3t1-9z" fill="#5c5c5c" /><circle cx="5" cy="27" r="2" fill="#ededed" /></svg></button>
          <div class="zoom">
            <button type="button" aria-label="Zoom in"><svg class="s24" viewBox="0 0 24 24"><path d="M12 2v20M2 12h20" stroke="#5c5c5c" stroke-width="5" stroke-linecap="round" /></svg></button>
            <button type="button" aria-label="Zoom out"><svg class="s24" viewBox="0 0 24 24"><path d="M2 12h20" stroke="#5c5c5c" stroke-width="5" stroke-linecap="round" /></svg></button>
          </div>
          <button type="button" aria-label="Default viewport"><svg class="s32" viewBox="0 0 32 32"><path d="M1 17L16 5l15 12M25 12V4" stroke="#5c5c5c" stroke-width="3" fill="none" /><path d="M5 18l11-9 11 9v11h-8v-7h-6v7H5z" fill="#5c5c5c" /><path d="M22 3h5v10l-5-4z" fill="#5c5c5c" /></svg></button>
        </div>
      </div>
      <div class="shade"></div>
    </section>
  </main>

  <footer class="dock-area">
    <ul class="dock">
      {#each dockMain as d}{@render dockItem(d)}{/each}
      <li class="dock-divider"></li>
      {#each dockApps as d}{@render dockItem(d)}{/each}
      <li class="dock-divider"></li>
      {#each dockEnd as d}{@render dockItem(d)}{/each}
    </ul>
  </footer>
</div>

<style>
  :global(body) { margin: 0; background: #0d0e06; }
  .screen {
    min-height: 100vh; display: flex; flex-direction: column; overflow: hidden;
    font-family: Inter, "Liberation Sans", sans-serif;
    background: linear-gradient(#cfcbc0 2%, #8b8075 18%, #5f5044 24%, #10151a 28%, #0b1216 60%, #201d0a 75%, #12130a 91%, #14150a);
  }
  .defs { position: absolute; }
  button { appearance: none; border: 0; background: none; padding: 0; margin: 0; font: inherit; color: inherit; display: flex; align-items: center; justify-content: center; }
  svg { display: block; overflow: visible; flex: none; }
  .s16 { width: 16px; height: 16px; }
  .s20 { width: 20px; height: 20px; }
  .s24 { width: 24px; height: 24px; }
  .s28 { width: 28px; height: 28px; }
  .s32 { width: 32px; height: 32px; }
  .s34 { width: 34px; height: 34px; }
  .s36 { width: 36px; height: 36px; }

  .menubar { height: 48px; display: flex; justify-content: space-between; align-items: center; padding: 0 38px 0 40px; background: linear-gradient(90deg, #f0efe9, #e3e1da); font-size: 25px; color: #111; white-space: nowrap; }
  .menus { display: flex; align-items: center; gap: 42px; }
  .app-name { font-weight: 700; font-size: 26px; }
  .apple { width: 26px; height: 32px; fill: #000; }
  .status { display: flex; align-items: center; gap: 37px; color: #1e1e1e; }
  .us { border: 2px solid #1e1e1e; border-radius: 6px; font-size: 22px; line-height: 28px; padding: 0 6px; font-weight: 500; }
  .battery { width: 52px; height: 32px; }
  .wifi { width: 36px; height: 28px; }
  .clock { display: flex; gap: 16px; margin-left: -4px; font-size: 26px; }

  .window { flex: 1; margin: 2px 8px 0 0; display: flex; flex-direction: column; border-radius: 20px 20px 22px 22px; overflow: hidden; border-top: 2px solid #656868; box-shadow: 0 0 0 2px #000; background: #1f2121; }
  .chrome { color: #c7c7c7; background: #1f2121; border-bottom: 2px solid #4a4a4a; }
  .tabs { height: 78px; display: flex; align-items: center; padding: 0 12px 0 42px; }
  .lights { display: flex; gap: 16px; width: 138px; }
  .lights i { width: 24px; height: 24px; border-radius: 50%; }
  .close { background: #ec6a5e; }
  .mini { background: #f4be4f; }
  .full { background: #61c554; }
  .tab { width: 46px; height: 32px; flex: none; box-sizing: border-box; border: 0 solid #3d3d3d; border-width: 0 2px; }
  .tab.first { width: 44px; border-left-color: transparent; }
  .tab.narrow { width: 44px; }
  .tab.last { border-right-color: transparent; width: 50px; padding-right: 6px; }
  .fav { width: 32px; height: 32px; }
  .fav-serif { font: 700 31px "Liberation Serif", serif; }
  .fav-ac { font: 700 22px "Liberation Sans", sans-serif; }
  .fav-r { font: 700 34px "Liberation Serif", serif; }
  .fav-s { font: 700 14px "Liberation Sans", sans-serif; }
  .active-tab { width: 64px; height: 68px; flex: none; align-self: flex-end; border-radius: 20px 20px 0 0; background: #3c3c3c; display: flex; justify-content: center; align-items: center; position: relative; }
  .active-tab button { margin-bottom: 12px; }
  .active-tab::before, .active-tab::after { content: ""; position: absolute; bottom: 0; width: 20px; height: 20px; }
  .active-tab::before { right: 100%; background: radial-gradient(circle at 0 0, transparent 20px, #3c3c3c 20px); }
  .active-tab::after { left: 100%; background: radial-gradient(circle at 100% 0, transparent 20px, #3c3c3c 20px); }
  .new-tab { width: 80px; }
  .tab-list { width: 56px; height: 56px; border-radius: 20px; background: #3c3c3c; margin-left: auto; }

  .toolbar { height: 92px; display: flex; align-items: center; background: #3c3c3c; border-radius: 20px 20px 0 0; padding: 0 30px; }
  .nav { display: flex; gap: 44px; width: 210px; }
  .omnibox { flex: 1; height: 68px; border-radius: 34px; background: #282828; display: flex; align-items: center; padding: 0 32px 0 10px; }
  .site { width: 48px; height: 48px; border-radius: 50%; background: #3c3c3c; }
  .omnibox input { flex: 1; border: 0; background: none; outline: 0; font: 28px Inter, sans-serif; color: #dedede; padding: 0; margin-left: 16px; }
  .tools { display: flex; align-items: center; margin-left: 36px; gap: 37px; }
  .divider { width: 4px; height: 32px; background: #5c5c5c; border-radius: 2px; }
  .avatar { width: 40px; height: 40px; border-radius: 50%; background: #3d93a5; color: #e8f4f6; font-size: 20px; }

  .bookmarks { display: flex; gap: 36px; height: 56px; padding: 0 24px 12px; background: #3c3c3c; font-size: 23px; }
  .bookmarks a { display: flex; align-items: center; gap: 13px; color: #c7c7c7; text-decoration: none; }

  .desmos-bar { height: 90px; display: grid; grid-template-columns: 4fr auto 5fr; align-items: center; background: #2a2a2a; border-bottom: 2px solid #000; color: #dcdcdc; font-family: "Liberation Sans", Arial, sans-serif; font-size: 29px; }
  .left { display: flex; align-items: center; padding-left: 26px; }
  .burger svg { width: 36px; height: 32px; }
  h1 { font-size: 32px; font-weight: 400; margin: 0 20px 0 32px; line-height: 40px; }
  .blue-button { background: #3e74d8; border: 2px solid #4f83df; border-radius: 6px; color: #fff; }
  .save { width: 130px; height: 64px; }
  .logo { font: 400 64px/80px Lato, sans-serif; color: #dcdcdc; padding-bottom: 4px; -webkit-text-stroke: 1px currentColor; }
  .right { display: flex; align-items: center; justify-content: flex-end; padding-right: 26px; }
  .login { width: 132px; height: 68px; border: 2px solid #dcdcdc; border-radius: 6px; box-sizing: border-box; }
  .or { margin: 0 16px; }
  .signup { width: 154px; height: 68px; }
  .save, .signup { box-sizing: border-box; }
  .icons { display: flex; gap: 44px; margin-left: 42px; }

  .calculator { flex: 1; display: grid; grid-template-columns: 894px 1fr; position: relative; background: #fff; min-height: 1200px; }
  .panel { position: relative; display: flex; flex-direction: column; border-right: 2px solid #c0c0c0; box-shadow: 2px 0 8px #0002; z-index: 1; font-family: "Liberation Sans", Arial, sans-serif; background: #fff; }
  .panel-tools { height: 94px; border-bottom: 2px solid #c4c4c4; background: linear-gradient(#fcfcfc, #e9e9e9); display: grid; grid-template-columns: 1fr auto 1fr; align-items: center; padding: 0 31px 0 30px; }
  .history { display: flex; gap: 34px; padding-right: 76px; }
  .arrow { width: 42px; height: 26px; }
  .panel-right { display: flex; justify-content: flex-end; gap: 40px; }
  .panel-tools > button { justify-self: start; }
  .row { display: flex; }
  .gutter { width: 76px; flex: none; box-sizing: border-box; }
  .num { display: block; font-size: 20px; line-height: 24px; padding: 2px 0 0 4px; }
  .selected { height: 120px; border: 2px solid #6f93cb; border-left: 0; border-bottom-width: 3px; position: relative; }
  .selected .gutter { background: #6f93cb; color: #fff; }
  .curve-icon { width: 58px; height: 58px; margin: 0 0 0 8px; }
  .math { flex: 1; display: flex; align-items: baseline; font: 42px/48px "Liberation Serif", serif; color: #000; padding: 42px 0 0 34px; outline: 0; }
  .math b { font-weight: 400; margin: 0 12px; }
  .math sup { font-size: 37px; line-height: 0; vertical-align: baseline; position: relative; top: -19px; }
  .delete { align-self: flex-start; margin: 14px 12px 0 0; }
  .empty { height: 101px; border-top: 1px solid #c5cbd5; }
  .empty .gutter { background: linear-gradient(#ededed 55%, #fff); color: #777; }
  .powered { margin-top: auto; padding-bottom: 24px; display: flex; flex-direction: column; align-items: center; font-size: 24px; line-height: 28px; color: #c4c4c4; }
  .logo.small { font-size: 47px; line-height: 40px; padding: 0; color: #c4c4c4; }
  .keypad { position: absolute; left: 10px; bottom: 10px; width: 156px; height: 84px; border: 2px solid #d2d2d2; border-radius: 8px; background: #ededed; box-sizing: border-box; gap: 18px; box-shadow: 0 0 14px #0002; }
  .kb { width: 54px; height: 36px; margin-bottom: 8px; }
  .tri { width: 24px; height: 14px; }

  .graph { position: relative; overflow: hidden; min-width: 0; }
  .plot { position: absolute; width: 100%; height: 100%; }
  .minor { stroke: #000; stroke-opacity: .14; stroke-width: 2; }
  .major { stroke: #000; stroke-opacity: .42; stroke-width: 2; }
  .axis { stroke: #16181a; stroke-width: 3; }
  .tick { font: 27px "Liberation Sans", Arial, sans-serif; fill: #000; stroke: #fff; stroke-width: 6; paint-order: stroke; }
  .curve { fill: none; stroke: #b94e48; stroke-width: 7; stroke-linejoin: round; }
  .poi { fill: #aaa6a6; }
  .tooltip { position: absolute; left: 925px; top: 574px; width: 239px; height: 91px; box-sizing: border-box; border: 2px solid #dedede; border-radius: 8px; background: #fff; box-shadow: 0 0 10px #0003; display: flex; align-items: center; justify-content: center; padding-bottom: 6px; font: 44px "Liberation Serif", serif; color: #222; white-space: pre; }
  .paren { font-size: 48px; line-height: 48px; }
  .controls { position: absolute; top: 10px; right: 10px; display: flex; flex-direction: column; gap: 10px; }
  .controls > button, .zoom { width: 74px; box-sizing: border-box; background: #ededed; border: 2px solid #d4d4d4; border-radius: 10px; box-shadow: 0 0 10px #0001; }
  .controls > button { height: 74px; }
  .zoom button { width: 100%; height: 71px; }
  .zoom button + button { border-top: 2px solid #d4d4d4; }
  .shade { position: absolute; inset: auto 0 0 0; height: 96px; z-index: 2; pointer-events: none; background: linear-gradient(transparent, #0002); mask: linear-gradient(90deg, transparent, #000 12%, #000 94%, transparent); }

  .dock-area { padding: 4px 0 10px; display: flex; justify-content: center; }
  .dock { list-style: none; margin: 0; height: 126px; box-sizing: border-box; display: flex; padding: 0 3px; border: 2px solid #47453a; border-radius: 36px; background: linear-gradient(90deg, #201f14, #1b1b15 35%, #2e2414 62%, #2a2114 85%, #232412); }
  .dock-slot { width: 104px; flex: none; display: flex; flex-direction: column; align-items: center; padding-top: 17px; box-sizing: border-box; }
  .dock-button { position: relative; }
  .app { width: 78px; height: 78px; }
  .petal { mix-blend-mode: multiply; opacity: .85; }
  .running { width: 8px; height: 8px; border-radius: 50%; margin-top: 17px; }
  .running.on { background: #a9a79a; }
  .badge { position: absolute; top: -9px; right: -11px; width: 36px; height: 36px; border-radius: 50%; background: #e04a3c; color: #fff; font-size: 22px; line-height: 36px; text-align: center; }
  .dock-divider { width: 2px; height: 94px; margin: 14px 23px 0; background: #5f5a4c; }
  .cal-month { font: 600 18px Inter, sans-serif; }
  .cal-day { font: 300 46px Inter, sans-serif; }
  .tv-text { font: 500 31px Inter, sans-serif; }
  .zoom-text { font: 700 19px Inter, sans-serif; }
</style>
